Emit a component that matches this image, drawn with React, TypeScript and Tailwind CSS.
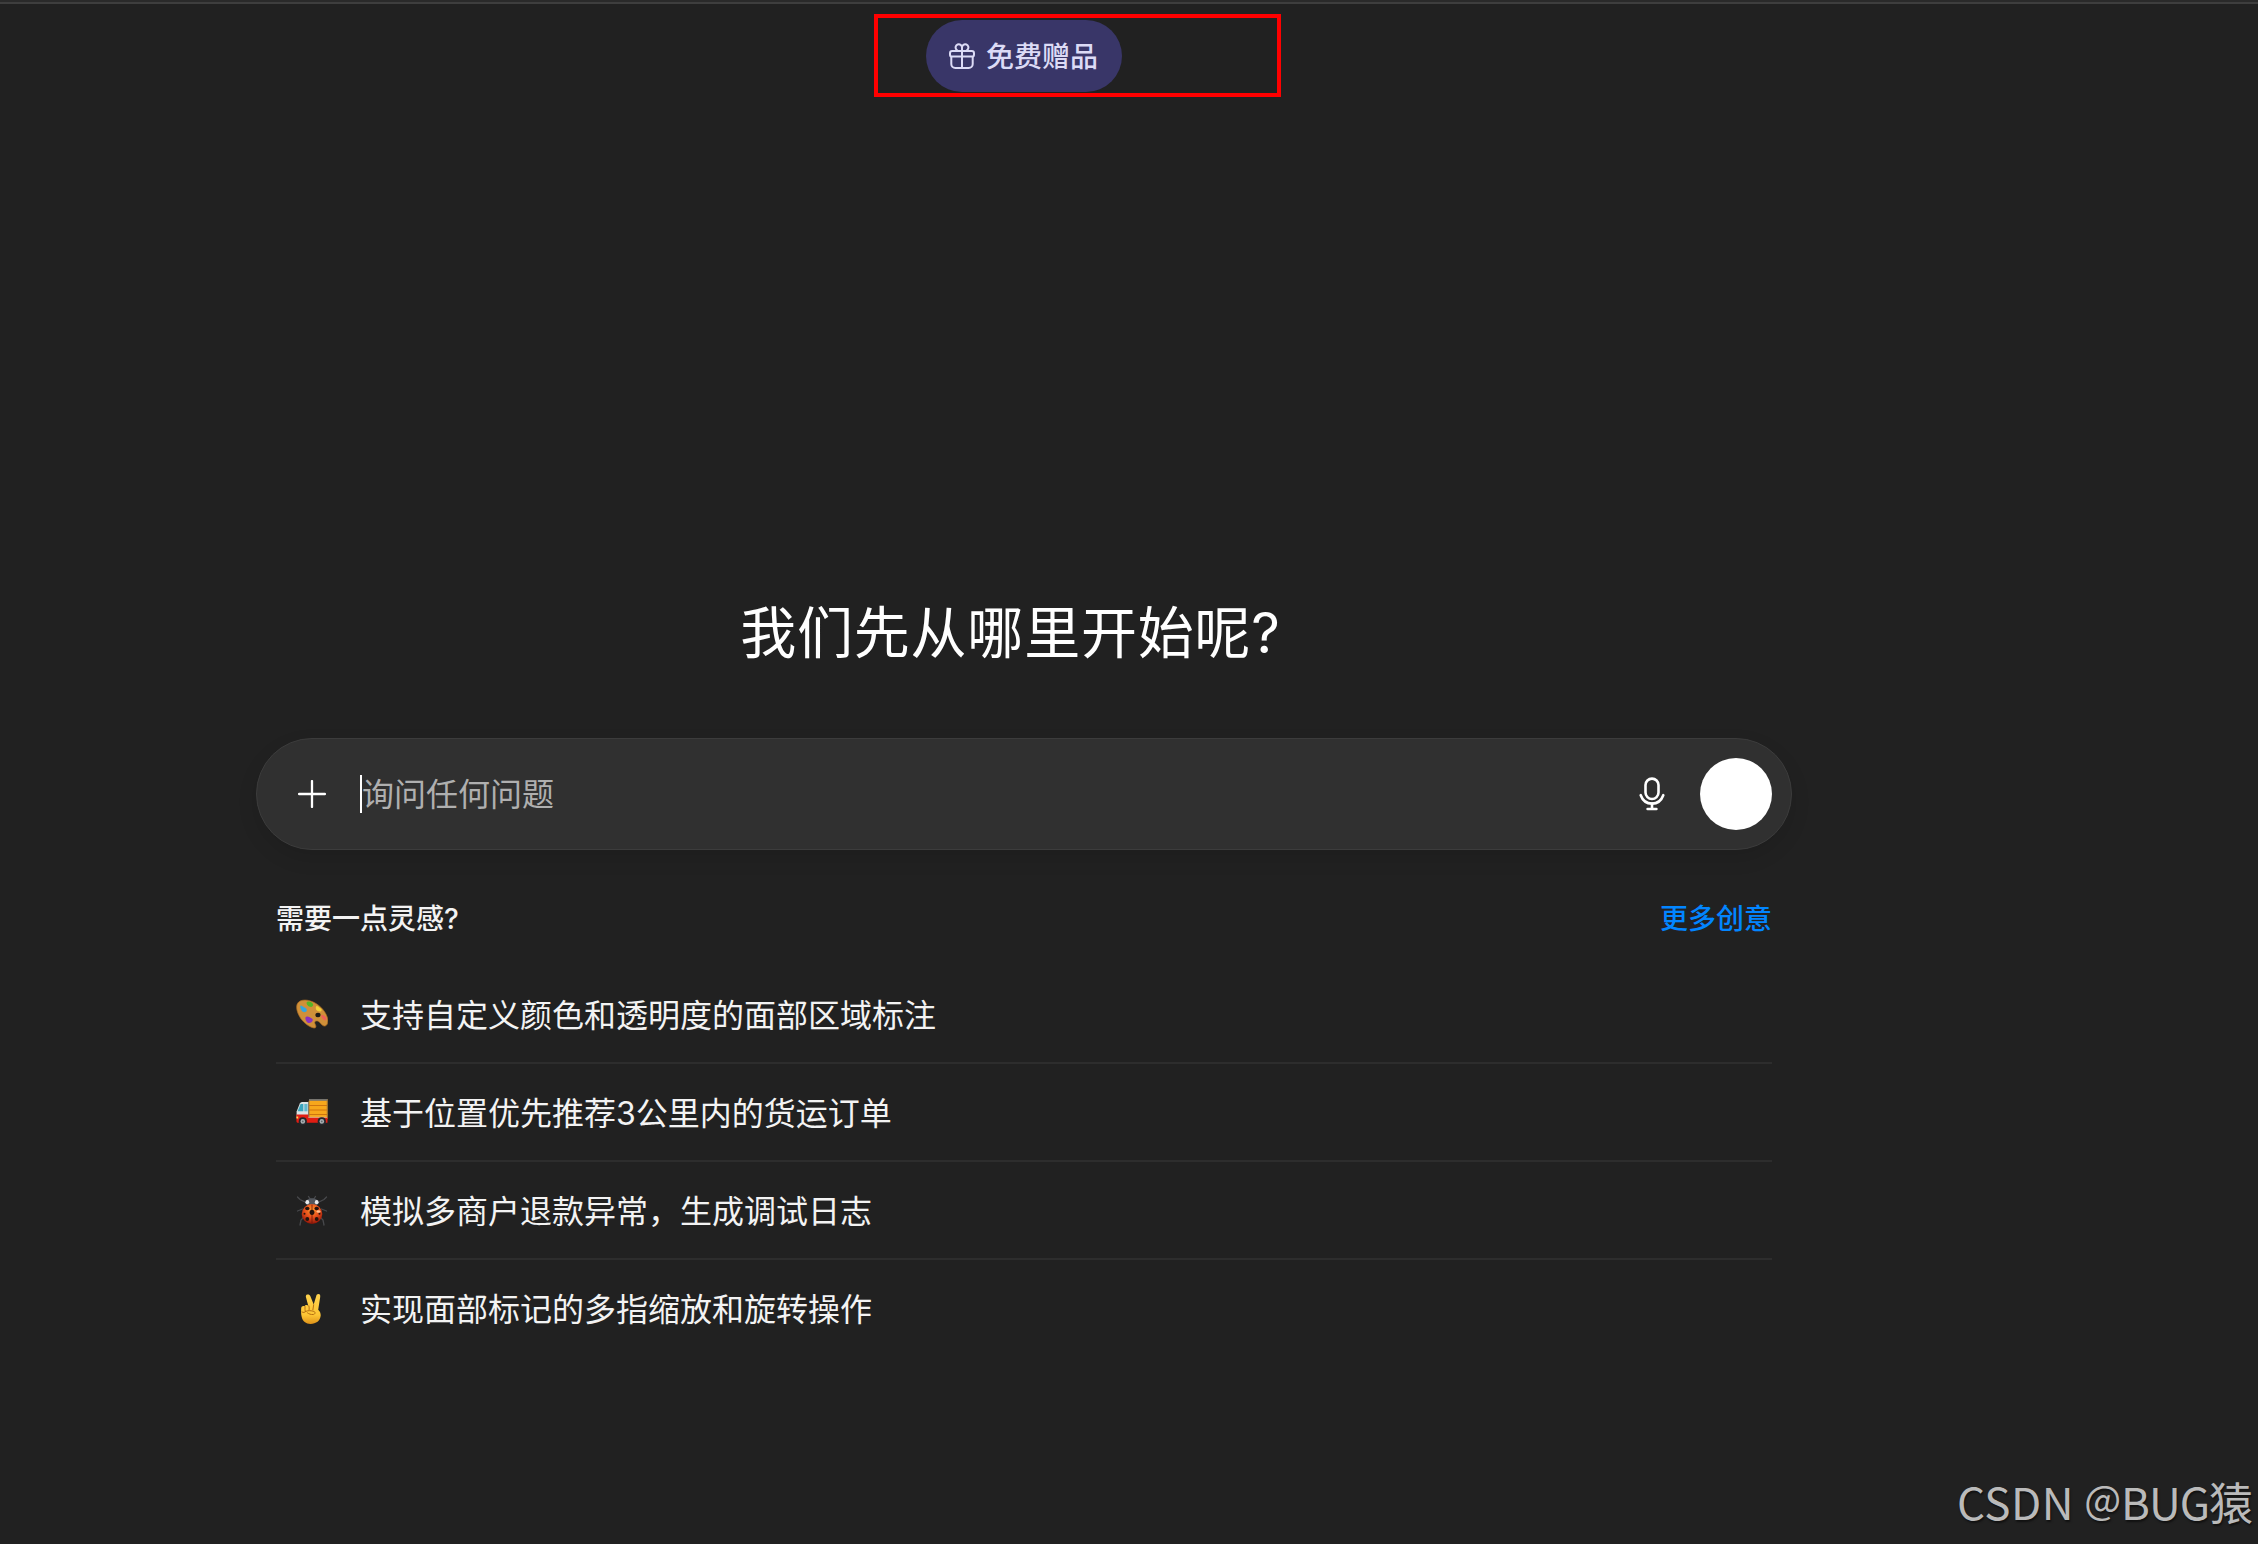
// App.tsx
import type { ReactNode } from "react";

function GiftIcon() {
  return (
    <svg viewBox="0 0 26 26" className="h-[26px] w-[26px] shrink-0" fill="none" stroke="currentColor" strokeWidth="2">
      <rect x="1" y="8" width="24" height="5.6" rx="2.2" />
      <path d="M2.3 13.6v7.4a4 4 0 0 0 4 4h13.4a4 4 0 0 0 4-4v-7.4" />
      <path d="M13 8v17" />
      <path d="M13 8V4.500A3.200 3.200 0 1 0 7.500 6.700L8.600 8M13 8V4.500A3.200 3.200 0 1 1 18.500 6.700L17.400 8" />
    </svg>
  );
}

function PlusIcon() {
  return (
    <svg viewBox="0 0 28 28" className="h-7 w-7" fill="none" stroke="currentColor" strokeWidth="2.3" strokeLinecap="round">
      <path d="M14 1.1v25.8M1.1 14h25.8" />
    </svg>
  );
}

function MicIcon() {
  return (
    <svg viewBox="0 0 26 34" className="h-[34px] w-[26px]" fill="none" stroke="currentColor" strokeWidth="2.6" strokeLinecap="round">
      <rect x="6.500" y="1.600" width="13" height="20.400" rx="6.500" />
      <path d="M1.700 18.200c1.900 5.200 6.200 8.400 11.300 8.400s9.400-3.200 11.300-8.400" />
      <path d="M13 26.600V32M8.600 32h8.800" />
    </svg>
  );
}

function PaletteEmoji() {
  return (
    <svg viewBox="0 0 32 32" className="h-8 w-8">
      <path
        d="M1 5.5C2.5 1.2 8.500 0 14.500 2C22 4.300 29 11 31.300 18.300C32.500 22 31.800 26.500 29 27C25.800 27.500 24.500 22.800 21.500 22C18.500 21.400 18.300 23.500 19.200 25.200C20.300 27.300 20.300 29.300 18 29C12.500 28 6 22.500 3 16.500C1.200 13 0 9 1 5.500Z"
        fill="#d09039"
        stroke="#a96c22"
        strokeWidth=".7"
      />
      <ellipse cx="22" cy="16" rx="2.600" ry="2.300" fill="#1f1a16" />
      <path d="M11 3c2-1 5 0 6 2 .7 1.700-1 3.400-3 2.800C12 7.500 9.500 4.500 11 3Z" fill="#55b526" />
      <path d="M4.500 6.500c1.500 0 2.500 1.500 4 2 1.700.6 2.800 2 2.200 3.500-.8 1.600-3.800 1.500-5-.3-.8-1.400-2-3.700-1.200-5.200Z" fill="#35a6dc" />
      <path d="M20.500 7c1.500 0 3 2 4.500 2.600 1.200.7.800 3-.8 3-2-.1-4.400-1-4.400-3 0-.9 0-2.200.7-2.600Z" fill="#f2cf38" />
      <path d="M25.500 16c2-.6 4.700 1.600 5 3.800.2 1.600-1.500 2-2.600 1.200-1.300-1-3.600-3.700-2.400-5Z" fill="#ee6157" />
      <path d="M9.500 18.500c.5-1.500 3-1.300 4.300-.2 1.500 1.200 3.300 1.300 3 3-.4 1.800-2.300 3-4.200 2.700-2-.5-3.700-3.800-3.100-5.500Z" fill="#8a32bd" />
    </svg>
  );
}

function TruckEmoji() {
  return (
    <svg viewBox="0 0 32 32" className="h-8 w-8">
      <path d="M13 2h18.500v20H13Z" fill="#f7a71b" />
      <path d="M13 2h18.500v1.800H13Z" fill="#77756f" />
      <path d="M13 8.500h18M13 13h18M13 17.500h18" stroke="#c96f0e" strokeWidth=".9" />
      <path d="M13 3.800v17.500M31.200 3.800v17.500" stroke="#a77b38" strokeWidth=".9" />
      <path d="M.6 21V14.500L3.800 6.500Q4.500 5 6 5h6.300v16Z" fill="#dbe3e4" />
      <path d="M1.600 14.300 4.600 7h2.700v7.300Z" fill="#3aa5bd" />
      <path d="M8.300 7h3.200v7.300H8.300Z" fill="#60b8ce" />
      <path d="M.4 17.500h11.900v3h19.200v5.300H1.300Q.2 25.500 .4 23.500Z" fill="#e11d13" />
      <path d="M12.300 20.300H31" stroke="#d8b8a6" strokeWidth=".8" />
      <path d="M.5 19.500h1.700v2H.5Z" fill="#ffd757" />
      {[6.8, 25.8].map((cx) => (
        <g key={cx}>
          <circle cx={cx} cy="24.400" r="4.100" fill="#23272b" />
          <circle cx={cx} cy="24.400" r="2.300" fill="#a9b0b3" />
          <circle cx={cx} cy="24.400" r=".9" fill="#666d70" />
        </g>
      ))}
    </svg>
  );
}

function BeetleEmoji() {
  return (
    <svg viewBox="0 0 32 32" className="h-8 w-8">
      <defs>
        <radialGradient id="shell" cx=".5" cy=".3" r=".7">
          <stop offset="0" stopColor="#ff9a2e" />
          <stop offset=".5" stopColor="#e8501b" />
          <stop offset="1" stopColor="#8e1408" />
        </radialGradient>
      </defs>
      <path
        d="M1.500 2 4 4.500l6 3M30.500 2 28 4.500l-6 3M1.500 16l5-2M30.500 16l-5-2M4 30l1-5 3-3M28 30l-1-5-3-3M12.500 1.500l2 3M19.500 1.500l-2 3"
        fill="none"
        stroke="#48494c"
        strokeWidth="1.300"
        strokeLinecap="round"
      />
      <path d="M9.500 8C10 4.600 13 3.300 16 3.300S22 4.600 22.500 8L21 10.500H11Z" fill="#53575d" />
      <ellipse cx="11.300" cy="7.200" rx="1.900" ry="2.100" fill="#e8eaec" />
      <ellipse cx="20.700" cy="7.200" rx="1.900" ry="2.100" fill="#e8eaec" />
      <ellipse cx="16" cy="19" rx="10.300" ry="10" fill="url(#shell)" />
      <path d="M16 9.500V29" stroke="#6d1507" strokeWidth=".8" />
      <g fill="#24120d">
        <ellipse cx="16" cy="17.300" rx="2.400" ry="2.600" />
        <ellipse cx="11.300" cy="13.500" rx="2.200" ry="1.700" />
        <ellipse cx="20.700" cy="13.500" rx="2.200" ry="1.700" />
        <circle cx="8.500" cy="18.800" r="1" />
        <circle cx="23.500" cy="18.800" r="1" />
        <circle cx="11.300" cy="24" r="1.900" />
        <circle cx="20.700" cy="24" r="1.900" />
      </g>
      <ellipse cx="22.500" cy="16.500" rx="2" ry="1.200" fill="#ffd2a8" opacity=".85" />
    </svg>
  );
}

function VictoryEmoji() {
  return (
    <svg viewBox="0 0 32 32" className="h-8 w-8">
      <defs>
        <linearGradient id="skin" x1="0" y1="0" x2="0" y2="1">
          <stop offset="0" stopColor="#ffd34e" />
          <stop offset=".7" stopColor="#fdc534" />
          <stop offset="1" stopColor="#df9219" />
        </linearGradient>
      </defs>
      <path
        d="M11.300 1.500c-1.300.3-1.600 1.300-1.400 2.600l2.300 8.500c-1.200-1-3-.8-3.700.7-1.400-.8-3.200 0-3.300 1.800-.2 3-.2 6 .4 8.500C6.500 28.300 10 31 14.500 31c5.700 0 9.800-3.200 10.200-8.400.1-2.200-.8-4.400-2.500-5.800l2-12.700c.3-2-.3-3-1.700-3.100-1.300 0-2 .8-2.400 2.400l-2.400 8.200-3.300-8.400c-.6-1.300-1.600-2-3.100-1.700Z"
        fill="url(#skin)"
      />
      <path d="M9 13.500c-.2 1.800 0 4 .3 5.200M12.900 12.800c.4 1.200.4 3 .2 4.200M6 19c1.500.8 2.800.5 3.400-.4 2.400-1.400 6-1 8.500-.2 1.800.7 1.300 3-.7 3.100-2.200.2-4.300-.5-5.700-1.600M16.900 16.700l.8-5" fill="none" stroke="#b56f12" strokeWidth="1" strokeLinecap="round" />
    </svg>
  );
}

const ideas: { icon: ReactNode; text: string }[] = [
  { icon: <PaletteEmoji />, text: "支持自定义颜色和透明度的面部区域标注" },
  { icon: <TruckEmoji />, text: "基于位置优先推荐3公里内的货运订单" },
  { icon: <BeetleEmoji />, text: "模拟多商户退款异常，生成调试日志" },
  { icon: <VictoryEmoji />, text: "实现面部标记的多指缩放和旋转操作" },
];

export default function App() {
  return (
    <div className="relative h-[1544px] w-[2258px] overflow-hidden bg-[#212121] font-['Inter','Noto_Sans_CJK_SC',sans-serif] text-white">
      <div className="h-1 border-b-2 border-[#3e3e3e] bg-[#2a2a2a]" />

      <div className="flex w-[2048px] flex-col items-center">
        <button className="mt-4 flex h-[72px] w-[196px] items-center gap-[11px] rounded-full bg-[#393668] pl-[23px] text-[28px] leading-none font-medium whitespace-nowrap text-[#dcdbf6]">
          <GiftIcon />
          <span className="pt-0.5">免费赠品</span>
        </button>

        <h1 className="mt-[501px] h-20 pr-[27px] text-[56px] leading-[80px] tracking-[0.8px] whitespace-nowrap">
          我们先从哪里开始呢?
        </h1>

        {/* Composer */}
        <div className="mt-[65px] flex h-28 w-[1536px] items-center rounded-full border border-[#3c3c3c] bg-[#303030] pr-[19px] pl-[41px] shadow-[0_8px_20px_rgba(0,0,0,0.1)]">
          <PlusIcon />
          <div className="ml-[34px] flex flex-1 items-center">
            <div className="h-[38px] w-0.5 bg-white" />
            <span className="pt-px text-[32px] leading-[48px] text-[#afafaf]">询问任何问题</span>
          </div>
          <MicIcon />
          <div className="ml-[35px] h-[72px] w-[72px] rounded-full bg-white" />
        </div>

        {/* Ideas */}
        <div className="mt-[49px] w-[1496px]">
          <div className="flex h-10 items-center justify-between text-[28px] font-medium">
            <span className="text-[#f3f3f3]">需要一点灵感?</span>
            <a className="text-[#0285ff]">更多创意</a>
          </div>
          <ul className="mt-[27px]">
            {ideas.map((idea) => (
              <li
                key={idea.text}
                className="flex h-[98px] items-center border-b-2 border-[#2d2d2d] pl-5 text-[32px] text-[#f3f3f3] last:border-transparent"
              >
                <span className="pt-px">{idea.icon}</span>
                <span className="ml-8 pt-[3px]">{idea.text}</span>
              </li>
            ))}
          </ul>
        </div>
      </div>

      {/* Highlight frame */}
      <div className="absolute top-[14px] left-[874px] h-[83px] w-[407px] border-4 border-[#ff0000]" />

      <div className="absolute right-[5px] bottom-[11px] flex font-['Noto_Sans_CJK_SC',sans-serif] text-[44px] leading-[64px] whitespace-pre text-[#bababa] [text-shadow:1px_2px_2px_rgba(0,0,0,0.5)]">
        <span className="tracking-[0.4px]">CSDN </span>
        <span className="-mt-1 text-[39px]">@</span>
        <span className="-tracking-[1px]">BUG</span>
        <span>猿</span>
      </div>
    </div>
  );
}
